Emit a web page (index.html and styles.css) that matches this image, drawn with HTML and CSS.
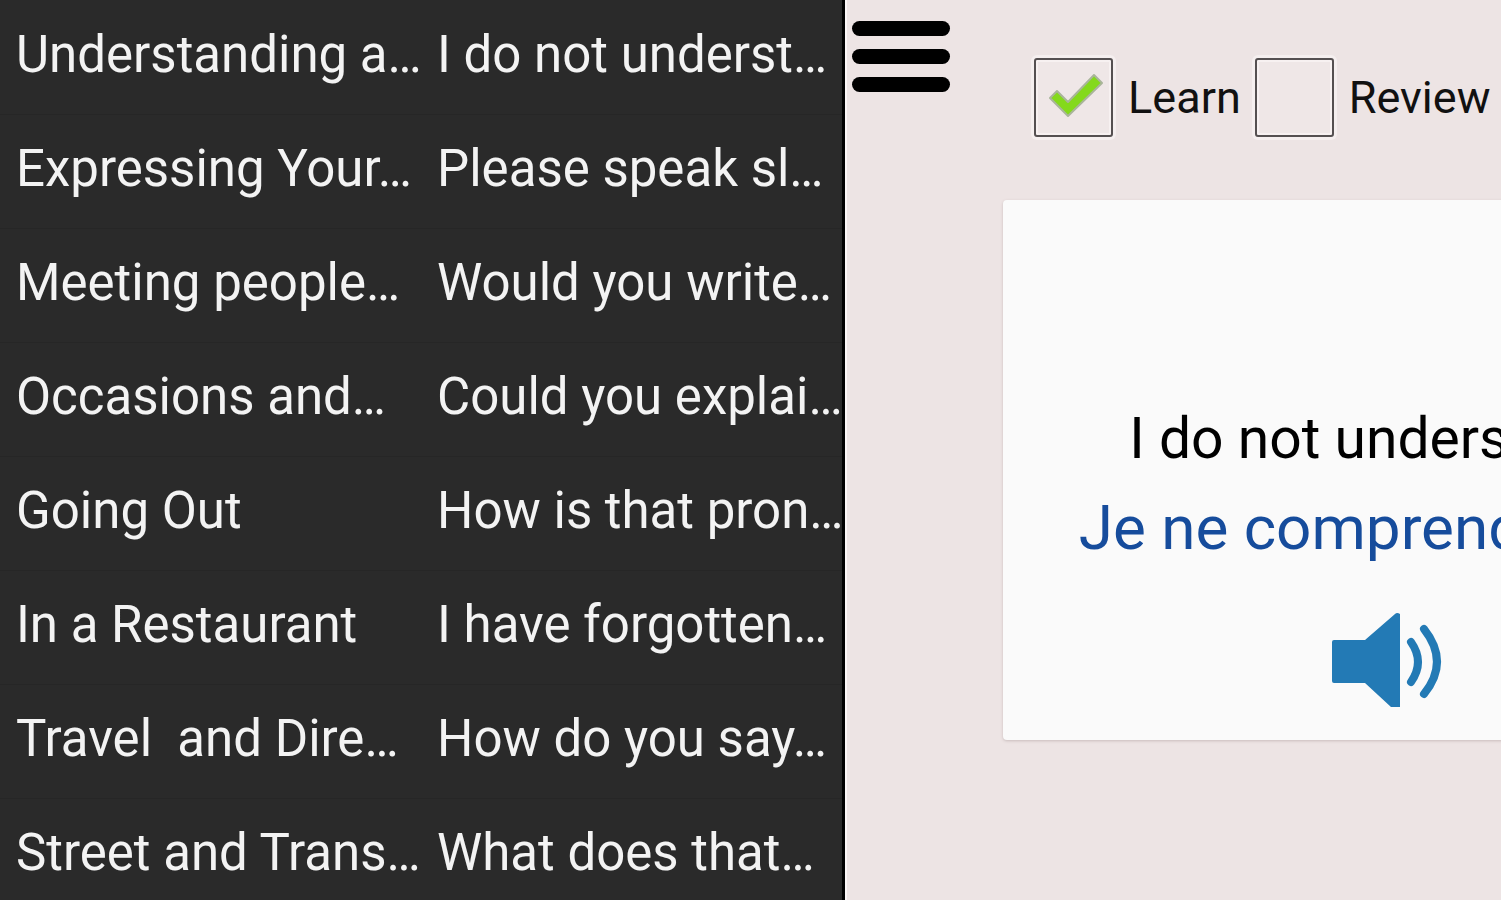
FILE: index.html
```html
<!DOCTYPE html>
<html lang="en">
<head>
    <meta charset="UTF-8">
    <meta name="viewport" content="width=device-width, initial-scale=1.0">
    <title>Learn French</title>
    <link rel="stylesheet" href="styles.css">
</head>
<body>
    <!-- Side menu: categories and phrases -->
    <nav class="drawer">
        <ul class="list">
            <li><a href="#">Understanding a…</a></li>
            <li><a href="#">Expressing Your…</a></li>
            <li><a href="#">Meeting people…</a></li>
            <li><a href="#">Occasions and…</a></li>
            <li><a href="#">Going Out</a></li>
            <li><a href="#">In a Restaurant</a></li>
            <li><a href="#">Travel  and Dire…</a></li>
            <li><a href="#">Street and Trans…</a></li>
        </ul>
        <ul class="list">
            <li><a href="#">I do not underst…</a></li>
            <li><a href="#">Please speak sl…</a></li>
            <li><a href="#">Would you write…</a></li>
            <li><a href="#">Could you explai…</a></li>
            <li><a href="#">How is that pron…</a></li>
            <li><a href="#">I have forgotten…</a></li>
            <li><a href="#">How do you say…</a></li>
            <li><a href="#">What does that…</a></li>
        </ul>
    </nav>

    <main class="page">
        <button class="menu" aria-label="Menu">
            <span></span>
            <span></span>
            <span></span>
        </button>
        <div class="content">
            <div class="modes">
                <label><input type="checkbox" checked>Learn</label>
                <label><input type="checkbox">Review</label>
            </div>
            <div class="card">
                <p class="english">I do not understand.</p>
                <p class="french">Je ne comprends pas.</p>
                <button class="speak" aria-label="Listen">
                    <svg viewBox="0 0 112 98" width="112" height="98">
                        <path d="M3 29H34L64 3Q66 1 69 3V96H60L34 72H3Q1 72 1 70V31Q1 29 3 29Z" fill="#237ab5"/>
                        <path d="M80 31Q94 51 80 71M93 18Q119 51 93 83" fill="none" stroke="#237ab5" stroke-width="8" stroke-linecap="round"/>
                    </svg>
                </button>
            </div>
        </div>
    </main>
</body>
</html>
```
FILE: styles.css
```css
* {
    box-sizing: border-box;
}
body {
    margin: 0;
    display: flex;
    height: 100vh;
    overflow: hidden;
    font-family: Roboto, sans-serif;
    background: #ede4e4;
    color: #111;
}
button {
    border: none;
    background: none;
    padding: 0;
    cursor: pointer;
}

/* side menu */
.drawer {
    flex: 0 0 56.3%;
    display: flex;
    overflow: hidden;
    background: #2a2a2a;
    border-right: 3px solid #000;
}
.list {
    flex: 0 0 50%;
    min-width: 0;
    list-style: none;
    margin: 0;
    padding: 1px 0 0;
}
.list a {
    display: block;
    height: 114px;
    padding-left: 16px;
    border-bottom: 1px solid #262626;
    color: #f3f3f3;
    font-size: 51px;
    line-height: 108px;
    text-decoration: none;
    white-space: pre;
}

/* page pushed to the right by the menu */
.page {
    flex: 1;
    min-width: 0;
    display: flex;
    align-items: flex-start;
    gap: 53px;
    padding-left: 5px;
    overflow: hidden;
    border-left: 2px solid #fbf6f6;
}
.menu {
    flex: none;
    display: flex;
    flex-direction: column;
    gap: 13px;
    width: 98px;
    margin-top: 21px;
}
.menu span {
    height: 15px;
    border-radius: 8px;
    background: #000;
}
.content {
    flex: none;
    width: 768px;
    padding-top: 58px;
}
.modes {
    display: flex;
    gap: 14px;
    padding-left: 31px;
}
.modes label {
    display: flex;
    align-items: center;
    gap: 15px;
    font-size: 45px;
    line-height: 79px;
}
.modes input {
    appearance: none;
    width: 79px;
    height: 79px;
    margin: 0;
    border: 2px solid #555051;
    border-radius: 3px;
    background: #efe7e7;
    box-shadow: 0 0 0 3px #f5efef, inset 0 0 0 2px #f7f1f1;
}
.modes input:checked {
    background: #efe7e7 url("data:image/svg+xml,%3Csvg xmlns='http://www.w3.org/2000/svg' viewBox='0 0 73 73'%3E%3Cpath d='M13 37L20 30L31 41L57 14L65 22L31 55Z' fill='%2384d91c' stroke='%23a9b59a' stroke-width='2' stroke-linejoin='round'/%3E%3C/svg%3E") center / 73px no-repeat;
}
.card {
    height: 540px;
    margin-top: 63px;
    padding-top: 203px;
    border-radius: 4px;
    background: #fafafa;
    box-shadow: 0 1px 3px #c9bcbc;
    text-align: center;
}
.card p {
    margin: 0;
    padding-right: 8px;
    white-space: nowrap;
}
.english {
    color: #000;
    font-size: 57px;
    line-height: 72px;
}
.french {
    padding-top: 11px;
    color: #164c9c;
    font-size: 62px;
    line-height: 84px;
}
.speak {
    margin-top: 41px;
}
```
